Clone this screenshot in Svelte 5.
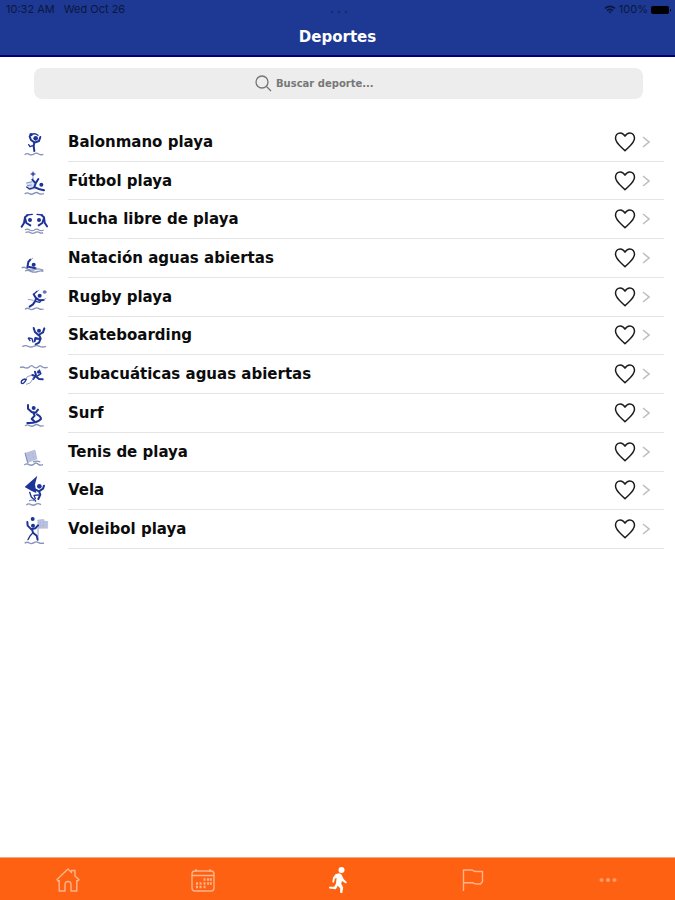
<script>
  const sports = [
    { id: 'handball', name: 'Balonmano playa' },
    { id: 'football', name: 'Fútbol playa' },
    { id: 'wrestling', name: 'Lucha libre de playa' },
    { id: 'swimming', name: 'Natación aguas abiertas' },
    { id: 'rugby', name: 'Rugby playa' },
    { id: 'skate', name: 'Skateboarding' },
    { id: 'diving', name: 'Subacuáticas aguas abiertas' },
    { id: 'surf', name: 'Surf' },
    { id: 'tennis', name: 'Tenis de playa' },
    { id: 'sailing', name: 'Vela' },
    { id: 'volleyball', name: 'Voleibol playa' }
  ];

  let query = $state('');
  let favourites = $state({});

  const visible = $derived(
    sports.filter((s) => s.name.toLowerCase().includes(query.toLowerCase()))
  );
</script>

{#snippet pictogram(id)}
  <svg class="pictogram" viewBox="0 0 90 96" aria-hidden="true">
    {#if id === 'handball'}
      <circle class="solid" cx="36" cy="26" r="5" />
      <circle class="solid" cx="50" cy="37" r="7" />
      <path class="limb" d="M32 32L36 42L47 50L60 45L64 33M46 49L44 60L46 75" />
      <path class="limb thin" d="M32 30Q44 18 57 28M44 58L33 62L29 56" />
      <path class="wave" d="M17 86q7-6 14-1q7 4 14-1q7-5 14 0q7 4 14 1" />
    {:else if id === 'football'}
      <path class="pale" d="M21 52L45 48L48 74L26 76Z" />
      <circle class="solid" cx="42" cy="27" r="5" />
      <path class="fine" d="M42 19V44M33 27H51M22 54L40 50M24 62L38 60" />
      <circle class="solid" cx="67" cy="59" r="6" />
      <path class="limb" d="M40 44L50 55L46 66L62 73L75 76M50 55L58 42" />
      <path class="limb thin" d="M47 67L32 72L23 66" />
      <path class="wave" d="M17 87q7-6 14-1q7 4 14-1q7-5 14 0q7 4 16 1" />
    {:else if id === 'wrestling'}
      <circle class="solid" cx="33" cy="48" r="6" />
      <circle class="solid" cx="60" cy="48" r="6" />
      <path class="limb thin" d="M24 33L40 31M54 31L70 33" />
      <path class="limb" d="M8 68L15 57L18 40L25 34M84 67L77 56L75 40L68 34" />
      <path class="limb" d="M18 42L22 57L34 64M75 42L70 57L59 64" />
      <path class="wave" d="M18 78q7-5 14 0q7 4 14 0q7-5 14 0q7 4 14 0M20 86q7-5 14 0q7 4 14 0q7-5 14 0q5 3 10 0" />
    {:else if id === 'swimming'}
      <circle class="solid" cx="44" cy="65" r="6" />
      <path class="limb" d="M25 74L28 57L34 50M31 72L50 76" />
      <path class="fine" d="M34 51L42 45" />
      <path class="wave" d="M8 75q8-5 15 2q12 8 26 2q12-4 24 3M18 84q9-4 17 1q12 5 22 0q9-3 16 0" />
    {:else if id === 'rugby'}
      <ellipse class="muted" cx="77" cy="33" rx="6" ry="5" />
      <circle class="solid" cx="62" cy="44" r="6" />
      <path class="limb" d="M44 40L50 50L61 58L74 57M52 51L48 61L42 70L32 77" />
      <path class="limb thin" d="M50 61L62 64L66 59M46 38L54 31" />
      <path class="fine" d="M54 31L61 27M27 55L44 58M72 57L81 52" />
      <path class="wave" d="M18 85q7-6 14-1q7 4 14-1q7-5 14 0q7 4 14 1" />
    {:else if id === 'skate'}
      <circle class="solid" cx="60" cy="32" r="6" />
      <path class="limb" d="M44 24L48 36L58 45L72 37L76 25M60 44L65 56L60 68L50 73" />
      <path class="limb" d="M61 57L49 54L47 64" />
      <path class="limb thin" d="M29 54L39 56L42 66M28 55L33 62" />
      <path class="wave" d="M10 80q9-6 18-1q8 4 16 0q9-5 18 0q9 4 19 0" />
    {:else if id === 'diving'}
      <path class="wave" d="M3 26q7-4 14 0q8 3 14-2q7-8 13 0q7 5 13 0q7-7 13 0q7 4 16 1" />
      <circle class="solid" cx="59" cy="39" r="5" />
      <path class="limb" d="M40 48L50 52L60 60L71 61M43 60L51 48L48 38" />
      <path class="limb thin" d="M52 53L66 44L61 33" />
      <path class="fine" d="M40 48L25 53L18 64M44 57L33 72L21 76" />
      <path class="limb thin" d="M18 60Q5 63 7 72Q14 78 22 61" />
    {:else if id === 'surf'}
      <circle class="solid" cx="44" cy="33" r="6" />
      <path class="limb" d="M27 24L27 35L38 45L50 47L57 38M42 46L47 56L38 66L46 73" />
      <path class="limb" d="M25 78Q51 80 66 66Q66 58 54 52" />
      <path class="wave" d="M18 87q7-6 14-1q7 4 14-1q7-5 14 0q7 4 14 1" />
    {:else if id === 'tennis'}
      <path class="net" d="M18 52L48 42L54 69L25 80Z" />
      <path class="mesh" d="M28 49L35 76M38 45L45 73M20 61L50 51M23 71L52 60" />
      <path class="fine" d="M18 50L27 83" />
      <path class="wave" d="M16 87q7-6 14-1q7 4 14-1q7-8 14 0q7 4 14 1M42 78q12-5 22 0" />
    {:else if id === 'sailing'}
      <path class="solid" d="M17 36L55 2L48 28L52 54L38 48Z" />
      <circle class="solid" cx="61" cy="34" r="7" />
      <path class="limb" d="M50 44L60 49L72 41L75 32M60 49L64 59L58 72" />
      <path class="limb thin" d="M59 60L45 61L49 71M32 52L37 66L50 78" />
      <path class="wave" d="M22 90q7-6 14-1q7 4 14-1q7-5 16 1M30 78q10-5 17 0" />
    {:else}
      <path class="net" d="M56 18L74 16L76 22L86 22V43H57Z" />
      <path class="mesh" d="M57 26H85M57 34H85M64 18V43M73 18V43" />
      <circle class="solid" cx="41" cy="15" r="6" />
      <circle class="solid" cx="42" cy="35" r="6" />
      <path class="limb" d="M25 24L26 35L37 46L49 43L57 34M39 46L42 56L53 65L56 77" />
      <path class="limb thin" d="M42 56L33 66L27 77" />
      <path class="fine" d="M57 43V72" />
      <path class="wave" d="M17 88q7-6 14-1q7 4 14-1q7-5 14 0q7 4 16 1" />
    {/if}
  </svg>
{/snippet}

<div class="screen">
  <header>
    <div class="status">
      <div class="group"><span>10:32 AM</span><span>Wed Oct 26</span></div>
      <svg class="dots" width="18" height="4" viewBox="0 0 18 4" aria-hidden="true">
        <circle cx="2" cy="2" r="1.3" /><circle cx="9" cy="2" r="1.3" /><circle cx="16" cy="2" r="1.3" />
      </svg>
      <div class="group right">
        <svg width="12" height="9" viewBox="0 0 12 9" aria-hidden="true">
          <path d="M1 3.4Q6-.8 11 3.4M3 5.6Q6 3.2 9 5.6" fill="none" stroke="currentColor" stroke-width="1.6" />
          <path d="M4.4 6.8Q6 5.6 7.6 6.8L6 8.6Z" fill="currentColor" />
        </svg>
        <span>100%</span>
        <svg width="20" height="8" viewBox="0 0 20 8" aria-hidden="true">
          <rect width="18" height="8" rx="2" fill="#000" /><path d="M19 3v2.500l1-.6V3.500z" />
        </svg>
      </div>
    </div>
    <h1>Deportes</h1>
  </header>

  <main>
    <label class="search">
      <svg width="17" height="17" viewBox="0 0 17 17" aria-hidden="true">
        <circle cx="7" cy="7" r="6" /><path d="M11.5 11.5L16 16" />
      </svg>
      <input type="text" placeholder="Buscar deporte..." aria-label="Buscar deporte" bind:value={query} />
    </label>

    <ul class:full={visible.length === sports.length}>
      {#each visible as sport (sport.id)}
        <li>
          {@render pictogram(sport.id)}
          <div class="row">
            <a href="#{sport.id}">{sport.name}</a>
            <button
              type="button"
              class="heart"
              class:on={favourites[sport.id]}
              aria-label="Favorito: {sport.name}"
              aria-pressed={!!favourites[sport.id]}
              onclick={() => (favourites[sport.id] = !favourites[sport.id])}
            >
              <svg width="22" height="20" viewBox="0 0 22 20" aria-hidden="true">
                <path d="M11 4.200C9.600 1.800 8 1 6.300 1C3.300 1 1.500 3.400 1.500 6.300C1.500 11.200 7 14.600 11 18.800C15 14.600 20.500 11.200 20.500 6.300C20.500 3.400 18.700 1 15.700 1C14 1 12.400 1.800 11 4.200Z" />
              </svg>
            </button>
            <svg class="chevron" width="8" height="12" viewBox="0 0 8 12" aria-hidden="true">
              <path d="M1 1L7 6L1 11" />
            </svg>
          </div>
        </li>
      {/each}
    </ul>
  </main>

  <nav>
    <a href="#inicio" aria-label="Inicio">
      <svg width="24" height="24" viewBox="0 0 24 24">
        <path d="M1 11.500L12 1L15.500 4.500V2.500H19V8L23 11.800L21.500 13L20.800 12.500V23H15V16.500Q15 13.500 12 13.500Q9 13.500 9 16.500V23H3.200V12.500L2.200 13.200Z" />
      </svg>
    </a>
    <a href="#calendario" aria-label="Calendario">
      <svg width="24" height="24" viewBox="0 0 24 24">
        <rect x="1" y="3" width="22" height="20" rx="3" />
        <path d="M1 7.500H23M5 1V4M19 1V4" />
        <path class="days" d="M12.500 11.500h2M16 11.500h2M18.800 11.500h2M5 15.500h2M8.500 15.500h2M12.500 15.500h2M16 15.500h2M18.800 15.500h2M5 19h2M8.500 19h2M12.500 19h2" />
      </svg>
    </a>
    <a href="#deportes" class="active" aria-label="Deportes" aria-current="page">
      <svg width="20" height="28" viewBox="0 0 20 28">
        <circle cx="13.500" cy="4" r="3" />
        <path d="M7.500 8.200L11 7.300Q14 7.800 14.400 10.500L15.800 13.200L18.900 16.200L18 17.500L14 15L13.200 17.800L15.200 21.500L14.200 27.200L12 26.500L12.300 22.500L9.800 19.800L7.800 23.300L1.300 22.600L1 20.800L6.300 20.800L8 17.500L8.600 11.800L6.800 12.800L5.900 16.800L4.300 16.300L5 11.500Z" />
      </svg>
    </a>
    <a href="#resultados" aria-label="Resultados">
      <svg width="22" height="24" viewBox="0 0 22 24">
        <path d="M1.500 23V2H10Q12 3.500 14 3.500H20.500V13.500L18.500 16H14.500Q12.500 16 10.500 14.700H1.500" />
      </svg>
    </a>
    <a href="#mas" aria-label="Más">
      <svg class="more" width="18" height="6" viewBox="0 0 18 6">
        <circle cx="2.500" cy="3" r="1.500" /><circle cx="9" cy="3" r="1.500" /><circle cx="15.500" cy="3" r="1.500" />
      </svg>
    </a>
  </nav>
</div>

<style>
  :global(body) {
    margin: 0;
    background: #fff;
  }

  .screen {
    display: flex;
    flex-direction: column;
    min-height: 100vh;
    font-family: 'DejaVu Sans', sans-serif;
    color: #0c0c0c;
  }

  svg {
    display: block;
    flex: none;
  }

  header {
    background: #1d3993;
    border-bottom: 2px solid #00007c;
  }

  .status {
    display: grid;
    grid-template-columns: 1fr auto 1fr;
    align-items: center;
    height: 19px;
    padding: 0 4px 0 6px;
    font: 11px/19px Inter, sans-serif;
    color: #0b1740;
  }

  .group {
    display: flex;
    align-items: center;
    gap: 9px;
  }

  .group.right {
    justify-content: flex-end;
    gap: 3px;
  }

  .dots {
    margin-top: 4px;
    fill: #172c70;
  }

  h1 {
    margin: 0;
    padding: 8px 0;
    font-size: 15px;
    line-height: 20px;
    text-align: center;
    color: #fff;
  }

  main {
    flex: 1;
  }

  .search {
    display: flex;
    align-items: center;
    justify-content: center;
    gap: 4px;
    height: 31px;
    margin: 11px 32px 0 34px;
    border-radius: 8px;
    background: #ededed;
  }

  .search svg {
    fill: none;
    stroke: #747474;
    stroke-width: 1.3;
  }

  .search input {
    width: 146px;
    padding: 0;
    border: 0;
    outline: 0;
    background: none;
    font: bold 10px/16px 'DejaVu Sans', sans-serif;
    color: #333;
  }

  .search input::placeholder {
    color: #777;
    opacity: 1;
  }

  ul {
    display: grid;
    grid-auto-rows: 1fr;
    margin: 24px 11px 0 19px;
    padding: 0;
    list-style: none;
  }

  ul.full {
    min-height: 426px;
  }

  li {
    display: flex;
    gap: 19px;
  }

  .pictogram {
    width: 30px;
    height: 32px;
    align-self: center;
  }

  .solid {
    fill: #1d3396;
  }

  .muted {
    fill: #6675b4;
  }

  .pale {
    fill: #d5e3f3;
  }

  .net {
    fill: #bcc4e0;
    stroke: #8f9bc9;
    stroke-width: 1;
  }

  .mesh {
    stroke: #a2acd3;
    stroke-width: 1;
  }

  .limb {
    fill: none;
    stroke: #1d3396;
    stroke-width: 6;
    stroke-linecap: round;
    stroke-linejoin: round;
  }

  .limb.thin {
    stroke-width: 4;
  }

  .fine {
    fill: none;
    stroke: #5a6cb3;
    stroke-width: 2;
  }

  .wave {
    fill: none;
    stroke: #8793ba;
    stroke-width: 4;
  }

  .row {
    display: flex;
    flex: 1;
    align-items: center;
    border-bottom: 1px solid #e4e4e4;
  }

  .row a {
    flex: 1;
    font-size: 15px;
    font-weight: bold;
    line-height: 20px;
    color: inherit;
    text-decoration: none;
  }

  .heart {
    padding: 0;
    border: 0;
    background: none;
    cursor: pointer;
  }

  .heart path {
    fill: none;
    stroke: #1c1c1c;
    stroke-width: 1.5;
    stroke-linejoin: round;
  }

  .heart.on path {
    fill: #ff6112;
  }

  .chevron {
    margin: 0 14px 0 6px;
    fill: none;
    stroke: #bdbdbd;
    stroke-width: 1.5;
  }

  nav {
    position: sticky;
    bottom: 0;
    display: grid;
    grid-template-columns: repeat(5, 1fr);
    height: 42px;
    border-top: 1px solid #f8a67f;
    background: #ff6112;
  }

  nav a {
    display: flex;
    align-items: center;
    justify-content: center;
    padding: 2px 0 0 1px;
  }

  nav svg {
    fill: none;
    stroke: #ffb48c;
    stroke-width: 1.4;
    stroke-linejoin: round;
  }

  nav .days {
    stroke-width: 2.4;
  }

  nav .active svg {
    fill: #fff;
    stroke: none;
  }

  nav .more {
    fill: #ff9a66;
    stroke: #ffa273;
    stroke-width: 1;
  }
</style>
